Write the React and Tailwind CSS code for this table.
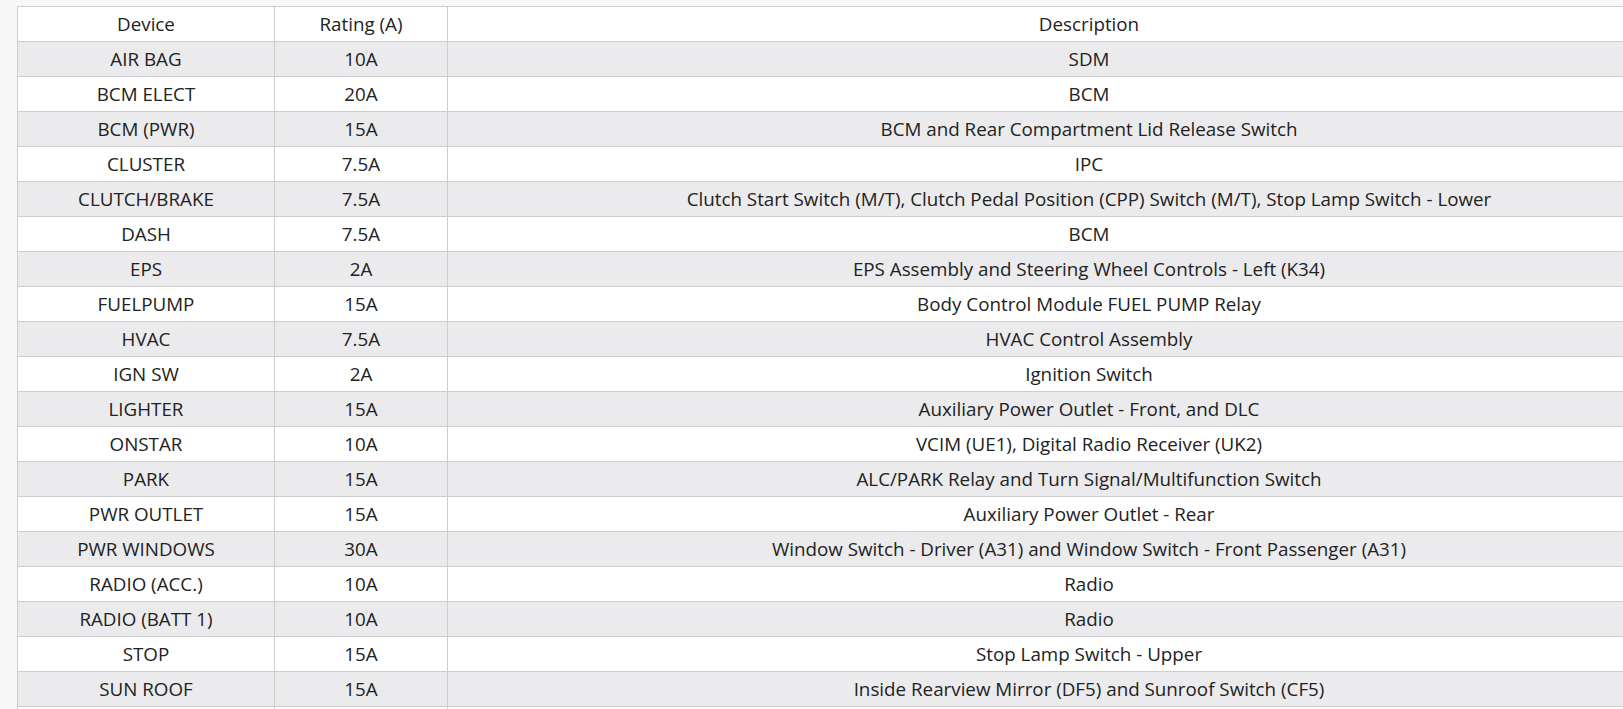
import React from "react";

const rows = [
  ["AIR BAG", "10A", "SDM"],
  ["BCM ELECT", "20A", "BCM"],
  ["BCM (PWR)", "15A", "BCM and Rear Compartment Lid Release Switch"],
  ["CLUSTER", "7.5A", "IPC"],
  ["CLUTCH/BRAKE", "7.5A", "Clutch Start Switch (M/T), Clutch Pedal Position (CPP) Switch (M/T), Stop Lamp Switch - Lower"],
  ["DASH", "7.5A", "BCM"],
  ["EPS", "2A", "EPS Assembly and Steering Wheel Controls - Left (K34)"],
  ["FUELPUMP", "15A", "Body Control Module FUEL PUMP Relay"],
  ["HVAC", "7.5A", "HVAC Control Assembly"],
  ["IGN SW", "2A", "Ignition Switch"],
  ["LIGHTER", "15A", "Auxiliary Power Outlet - Front, and DLC"],
  ["ONSTAR", "10A", "VCIM (UE1), Digital Radio Receiver (UK2)"],
  ["PARK", "15A", "ALC/PARK Relay and Turn Signal/Multifunction Switch"],
  ["PWR OUTLET", "15A", "Auxiliary Power Outlet - Rear"],
  ["PWR WINDOWS", "30A", "Window Switch - Driver (A31) and Window Switch - Front Passenger (A31)"],
  ["RADIO (ACC.)", "10A", "Radio"],
  ["RADIO (BATT 1)", "10A", "Radio"],
  ["STOP", "15A", "Stop Lamp Switch - Upper"],
  ["SUN ROOF", "15A", "Inside Rearview Mirror (DF5) and Sunroof Switch (CF5)"],
];

export default function App() {
  return (
    <div
      className="h-screen w-full overflow-hidden bg-[#f7f7f7] pt-[6px] pl-[17px]"
      style={{ fontFamily: '"Open Sans", "Noto Sans", sans-serif' }}
    >
      <table className="w-[1714px] table-fixed border-collapse text-[18.8px] leading-[24px] text-[#222] bg-white">
        <colgroup>
          <col className="w-[257px]" />
          <col className="w-[173px]" />
          <col />
        </colgroup>
        <thead>
          <tr className="h-[35px] bg-white">
            <th className="border border-[#cdcdcd] font-normal text-center p-0">Device</th>
            <th className="border border-[#cdcdcd] font-normal text-center p-0">Rating (A)</th>
            <th className="border border-[#cdcdcd] font-normal text-center p-0">Description</th>
          </tr>
        </thead>
        <tbody>
          {rows.map((r, i) => (
            <tr key={r[0]} className={i % 2 === 0 ? "h-[35px] bg-[#ebebed]" : "h-[35px] bg-white"}>
              <td className="border border-[#cdcdcd] text-center p-0">{r[0]}</td>
              <td className="border border-[#cdcdcd] text-center p-0">{r[1]}</td>
              <td className="border border-[#cdcdcd] text-center p-0">{r[2]}</td>
            </tr>
          ))}
          <tr className="h-[35px] bg-white">
            <td className="border border-[#cdcdcd] p-0"></td>
            <td className="border border-[#cdcdcd] p-0"></td>
            <td className="border border-[#cdcdcd] p-0"></td>
          </tr>
        </tbody>
      </table>
    </div>
  );
}
